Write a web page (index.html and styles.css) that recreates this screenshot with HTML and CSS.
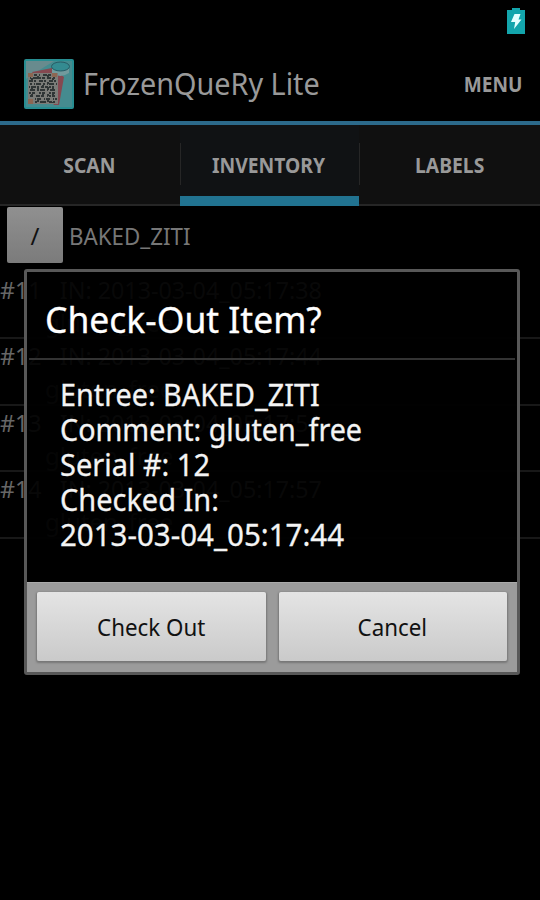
FILE: index.html
```html
<!DOCTYPE html>
<html lang="en">
<head>
<meta charset="utf-8">
<title>FrozenQueRy Lite</title>
<link rel="stylesheet" href="styles.css">
</head>
<body>
<div class="status">
  <svg width="20" height="28" viewBox="0 0 20 28"><path d="M1 3h5V1h8v2h5v24H1z" fill="#13a5ac"/><path d="M8.500 7h6l-2 5.500h3L8 22l1.200-7H5z" fill="#e4ffff"/></svg>
</div>
<header class="bar">
  <svg class="logo" width="50" height="50" viewBox="0 0 50 50">
    <rect width="50" height="50" rx="2" fill="#278d91"/>
    <rect x="2" y="2" width="46" height="46" fill="#458b8f"/>
    <path d="M2 2h28L14 12 2 20z" fill="#688b8e"/>
    <path d="M8 13L28 9l12 9-5 28h-5z" fill="#854850"/>
    <path d="M28 8v6q8 6 17 0V8z" fill="#719a9d"/>
    <ellipse cx="36.500" cy="7.500" rx="9" ry="4.500" fill="#348b91" stroke="#275b65"/>
    <rect x="4" y="14" width="30" height="31" fill="#7b7c78"/>
    <g fill="none" stroke="#303636" stroke-width="2">
      <path stroke-dasharray="3 2 1 3 4 1" d="M10 16h17"/>
      <path stroke-dasharray="1 2 4 2 2 3" d="M6 19h27"/>
      <path stroke-dasharray="4 1 2 3" d="M5 22h28"/>
      <path stroke-dasharray="2 2 1 1 5 2" d="M6 25h27"/>
      <path stroke-dasharray="1 3 3 1 2 2" d="M5 28h28"/>
      <path stroke-dasharray="5 2 1 2" d="M6 31h27"/>
      <path stroke-dasharray="2 1 3 4" d="M5 34h28"/>
      <path stroke-dasharray="3 3 1 1 2 1" d="M6 37h27"/>
      <path stroke-dasharray="1 1 4 3" d="M11 40h22"/>
      <path stroke-dasharray="2 3 3 1" d="M11 43h22"/>
      <path stroke-dasharray="2 6 3 5" d="M8 19v20M19 18v26M29 19v25"/>
      <path stroke-dasharray="3 4 2 3" d="M14 17v26M24 16v28"/>
    </g>
    <path d="M4 14h5v4H4zM28 14h5v4h-5zM4 40h5v5H4z" fill="#8c6652"/>
  </svg>
  <h1 class="name"><span class="fit fit-name">FrozenQueRy Lite</span></h1>
  <div class="menu"><span class="fit fit-menu">MENU</span></div>
</header>
<nav class="tabs">
  <div class="tab"><span class="fit fit-tab">SCAN</span></div>
  <div class="tab active"><span class="fit fit-tab">INVENTORY</span></div>
  <div class="tab"><span class="fit fit-tab">LABELS</span></div>
</nav>
<div class="path"><div class="root"><span>/</span></div><span class="fit fit-path">BAKED_ZITI</span></div>
<main class="list">
  <div class="row"><p class="fit fit-row">#11 &nbsp; IN: 2013-03-04_05:17:38</p><p class="note">gluten_free</p></div>
  <div class="row"><p class="fit fit-row">#12 &nbsp; IN: 2013-03-04_05:17:44</p><p class="note">gluten_free</p></div>
  <div class="row"><p class="fit fit-row">#13 &nbsp; IN: 2013-03-04_05:17:51</p><p class="note">gluten_free</p></div>
  <div class="row"><p class="fit fit-row">#14 &nbsp; IN: 2013-03-04_05:17:57</p><p class="note">gluten_free</p></div>
</main>
<section class="dialog">
  <h2 class="title"><span class="fit fit-title">Check-Out Item?</span></h2>
  <div class="body">
    <p class="fit l1">Entree: BAKED_ZITI</p>
    <p class="fit l2">Comment: gluten_free</p>
    <p class="fit l3">Serial #: 12</p>
    <p class="fit l4">Checked In:</p>
    <p class="fit l5">2013-03-04_05:17:44</p>
  </div>
  <div class="actions">
    <div class="btn"><span class="fit fit-btn">Check Out</span></div>
    <div class="btn"><span class="fit fit-btn">Cancel</span></div>
  </div>
</section>
</body>
</html>
```
FILE: styles.css
```css
* { box-sizing: border-box; }
body { margin: 0; width: 540px; height: 900px; overflow: hidden; position: relative; background: #000; color: #999; font-family: "Noto Sans", "Open Sans", sans-serif; }
h1, h2, p { margin: 0; font-weight: 400; }
.fit { display: block; width: max-content; transform-origin: left center; white-space: nowrap; }
.status { height: 49px; display: flex; justify-content: flex-end; padding: 7px 14px 0 0; }
.bar { height: 76px; display: flex; align-items: center; padding: 0 17px 2px 24px; border-bottom: 4px solid #2c6a8b; }
.logo { flex: none; }
.name { margin-left: 9px; font-size: 30px; line-height: 40px; flex: 1; }
.menu { font-size: 21px; font-weight: 700; }
.fit-name { transform: scaleX(.96); }
.fit-menu { transform: scaleX(.91); transform-origin: right center; }
.tabs { height: 81px; display: grid; grid-template-columns: 180px 179px 181px; background: #101010; border-bottom: 2px solid #262626; }
.tab { display: flex; align-items: center; justify-content: center; font-size: 21px; font-weight: 700; position: relative; padding-right: 2px; }
.fit-tab { transform: scaleX(.92); transform-origin: center; }
.tab:last-child { padding-right: 0; }
.tab + .tab::before { content: ""; position: absolute; left: 0; top: 18px; width: 1px; height: 42px; background: #262626; }
.tab.active { background: #101214; box-shadow: inset 0 -10px #217391; margin-bottom: -2px; padding-bottom: 2px; }
.path { height: 66px; display: flex; align-items: flex-start; padding: 1px 0 0 7px; font-size: 24px; line-height: 57px; color: #777; }
.root { width: 56px; height: 56px; margin-right: 6px; border-radius: 2px; background: linear-gradient(#909090, #7b7b7b); color: #111; text-align: center; }
.fit-path { transform: scaleX(.93); }
.row { height: 66.4px; border-bottom: 2px solid #181818; font-size: 24px; line-height: 33px; color: #666; white-space: nowrap; position: relative; top: 1px; }
.fit-row { transform: scaleX(.97); }
.note { padding-left: 45px; color: #444; }
.dialog { position: absolute; left: 24px; top: 269px; width: 496px; height: 406px; border: 3px solid #585858; border-radius: 3px; background: rgba(0, 0, 0, .92); color: #fff; display: flex; flex-direction: column; }
.title { height: 88px; margin: 0 2px; border-bottom: 2px solid #333; padding: 23px 0 0 16px; font-size: 36px; line-height: 50px; -webkit-text-stroke: .3px; }
.fit-title { transform: scaleX(.985); }
.body { flex: 1; padding: 17px 0 0 33px; font-size: 30px; line-height: 35px; color: #f4f4f4; -webkit-text-stroke: .3px; }
.l1 { transform: scaleX(.959); }
.l2 { transform: scaleX(.957); }
.l3, .l4 { transform: scaleX(.965); }
.l5 { transform: scaleX(.983); }
.actions { height: 90px; background: #9b9b9b; border-top: 1px solid #aaa; display: flex; gap: 13px; padding: 9px 10px 11px 10px; }
.btn { flex: 1; display: flex; align-items: center; justify-content: center; border-radius: 2px; background: linear-gradient(#e4e4e4, #cacaca); box-shadow: 0 1px 2px 1px #777; color: #111; font-size: 24px; padding-right: 1px; }
.fit-btn { transform: scaleX(.93); transform-origin: center; }
```
